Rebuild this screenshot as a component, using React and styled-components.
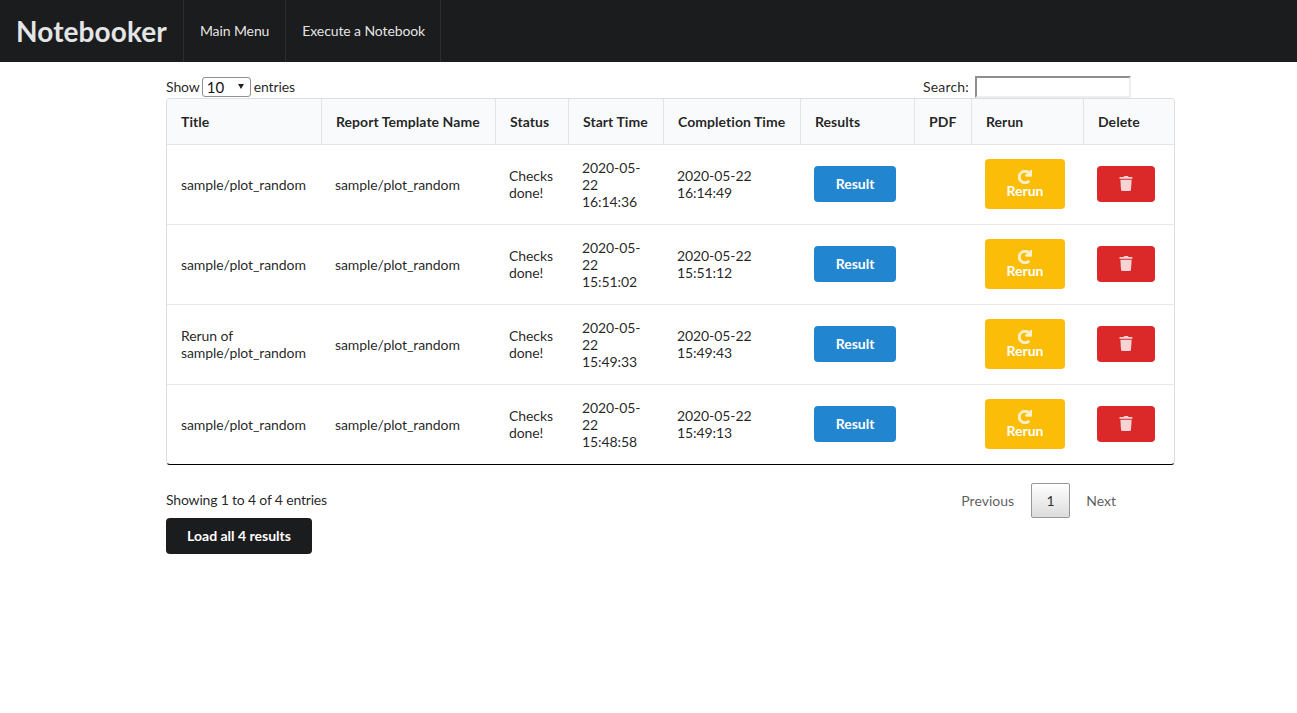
import React from 'react';
import styled, { createGlobalStyle } from 'styled-components';
import { FaRedo, FaTrash } from 'react-icons/fa';

const Global = createGlobalStyle`
  html, body { margin: 0; padding: 0; background: #fff; }
  body { font-family: Lato, "Helvetica Neue", Arial, sans-serif; font-size: 14px; line-height: 17px; color: rgba(0,0,0,.87); }
  * { box-sizing: border-box; }
`;

const Nav = styled.nav`
  display: flex;
  height: 62px;
  background: #1b1c1d;
`;
const Brand = styled.a`
  display: flex;
  align-items: center;
  padding: 0 16px 0 16px;
  font-size: 28px;
  font-weight: 700;
  letter-spacing: .1px;
  color: #e4e5e6;
`;
const NavItem = styled.a`
  display: flex;
  align-items: center;
  padding: 0 16px 2px 16px;
  border-left: 1px solid rgba(255,255,255,.08);
  color: rgba(255,255,255,.9);
  letter-spacing: -.1px;
  &:last-child {
    padding-right: 15px;
    border-right: 1px solid rgba(255,255,255,.08);
  }
`;
const Content = styled.main`
  width: 1009px;
  margin-left: 166px;
  padding-top: 14px;
`;
const Controls = styled.div`
  display: flex;
  justify-content: space-between;
  align-items: center;
  height: 22px;
  padding-right: 44px;
`;
const Label = styled.label`
  display: flex;
  align-items: center;
  gap: 3px;
  padding-bottom: 1px;
  letter-spacing: -.1px;
`;
const SearchLabel = styled(Label)`
  gap: 6px;
  padding-bottom: 0;
  align-items: flex-start;
  line-height: 21px;
  letter-spacing: .2px;
`;
const SelectWrap = styled.span`
  position: relative;
  display: block;
  margin: 1px 0 0 -1px;
  &::after {
    content: '';
    position: absolute;
    left: 36px;
    top: 7px;
    border-left: 3px solid transparent;
    border-right: 3px solid transparent;
    border-top: 5px solid #222;
    pointer-events: none;
  }
`;
const EntrySelect = styled.select`
  display: block;
  appearance: none;
  width: 49px;
  height: 20px;
  padding: 0 0 0 4px;
  font: 15px Lato, sans-serif;
  color: #111;
  background: #fff;
  border: 1px solid #8f8f8f;
  border-radius: 3px;
`;
const SearchInput = styled.input`
  width: 156px;
  height: 22px;
  border: 2px solid;
  border-color: #8f8f8f #eee #eee #8f8f8f;
  outline: none;
`;
const TableFrame = styled.div`
  border: 1px solid rgba(34,36,38,.15);
  border-bottom: 1px solid #000;
  border-radius: 4px;
  overflow: hidden;
`;
const Table = styled.table`
  width: 1007px;
  table-layout: fixed;
  border-collapse: separate;
  border-spacing: 0;
`;
const Th = styled.th`
  padding: 14px;
  background: #f9fafb;
  font-weight: 700;
  text-align: left;
  letter-spacing: .05px;
  white-space: nowrap;
  border-left: 1px solid rgba(34,36,38,.1);
  border-bottom: 1px solid rgba(34,36,38,.1);
  &:first-child { border-left: none; }
`;
const Td = styled.td`
  padding: 14px 14px ${p => (p.$nudge ? 15 : 14)}px;
  vertical-align: middle;
  letter-spacing: -.09px;
  border-bottom: 1px solid rgba(34,36,38,.1);
  tr:last-child > & { border-bottom: none; }
`;
const Button = styled.button`
  display: block;
  width: ${p => p.$w}px;
  height: ${p => p.$h || 36}px;
  padding: 0;
  border: none;
  border-radius: 4px;
  background: ${p => p.$bg};
  color: #fff;
  font: 700 14px/14px Lato, sans-serif;
  text-align: center;
`;
const RerunInner = styled.span`
  display: flex;
  flex-direction: column;
  align-items: center;
  svg {
    width: 14px;
    height: 14px;
    opacity: .8;
    stroke: currentColor;
    stroke-width: 35px;
  }
`;
const TrashIcon = styled(FaTrash)`
  display: block;
  margin: 0 auto 1px;
  width: 14px;
  height: 15px;
  opacity: .8;
`;
const Footer = styled.div`
  display: flex;
  justify-content: space-between;
  align-items: center;
  height: 35px;
  margin-top: 18px;
  padding-right: 59px;
`;
const Info = styled.div`
  padding-bottom: 2px;
  letter-spacing: -.18px;
`;
const Paging = styled.div`
  display: flex;
  align-items: center;
  gap: 17px;
`;
const PageLink = styled.span`
  color: rgba(51,51,51,.8);
  letter-spacing: .02px;
  &:last-child { margin-left: -1px; }
`;
const PageCurrent = styled.span`
  display: flex;
  align-items: center;
  justify-content: center;
  width: 39px;
  height: 35px;
  border: 1px solid #979797;
  border-radius: 2px;
  color: #333;
  background: linear-gradient(to bottom, #fff 0%, #dcdcdc 100%);
`;

const widths = [154, 174, 73, 95, 137, 114, 57, 112, 91];
const heads = ['Title', 'Report Template Name', 'Status', 'Start Time', 'Completion Time', 'Results', 'PDF', 'Rerun', 'Delete'];
const rows = [
  ['sample/plot_random', '2020-05-22 16:14:36', '2020-05-22 16:14:49'],
  ['sample/plot_random', '2020-05-22 15:51:02', '2020-05-22 15:51:12'],
  ['Rerun of sample/plot_random', '2020-05-22 15:49:33', '2020-05-22 15:49:43'],
  ['sample/plot_random', '2020-05-22 15:48:58', '2020-05-22 15:49:13'],
];

export default function App() {
  return (
    <>
      <Global />
      <Nav>
        <Brand>Notebooker</Brand>
        <NavItem>Main Menu</NavItem>
        <NavItem>Execute a Notebook</NavItem>
      </Nav>
      <Content>
        <Controls>
          <Label>Show <SelectWrap><EntrySelect defaultValue="10"><option>10</option><option>25</option></EntrySelect></SelectWrap> entries</Label>
          <SearchLabel>Search: <SearchInput /></SearchLabel>
        </Controls>
        <TableFrame>
          <Table>
            <colgroup>{widths.map((w, i) => <col key={i} style={{ width: w }} />)}</colgroup>
            <thead><tr>{heads.map(h => <Th key={h}>{h}</Th>)}</tr></thead>
            <tbody>
              {rows.map((r, i) => (
                <tr key={i}>
                  <Td $nudge={r[0].length > 20}>{r[0]}</Td>
                  <Td>sample/plot_random</Td>
                  <Td $nudge>Checks done!</Td>
                  <Td>{r[1]}</Td>
                  <Td $nudge>{r[2]}</Td>
                  <Td $nudge><Button $w={82} $bg="#2185d0">Result</Button></Td>
                  <Td />
                  <Td $nudge><Button $w={80} $h={50} $bg="#fbbd08"><RerunInner><FaRedo />Rerun</RerunInner></Button></Td>
                  <Td $nudge><Button $w={58} $bg="#db2828"><TrashIcon /></Button></Td>
                </tr>
              ))}
            </tbody>
          </Table>
        </TableFrame>
        <Footer>
          <Info>Showing 1 to 4 of 4 entries</Info>
          <Paging>
            <PageLink>Previous</PageLink>
            <PageCurrent>1</PageCurrent>
            <PageLink>Next</PageLink>
          </Paging>
        </Footer>
        <Button $w={146} $bg="#1b1c1d">Load all 4 results</Button>
      </Content>
    </>
  );
}
